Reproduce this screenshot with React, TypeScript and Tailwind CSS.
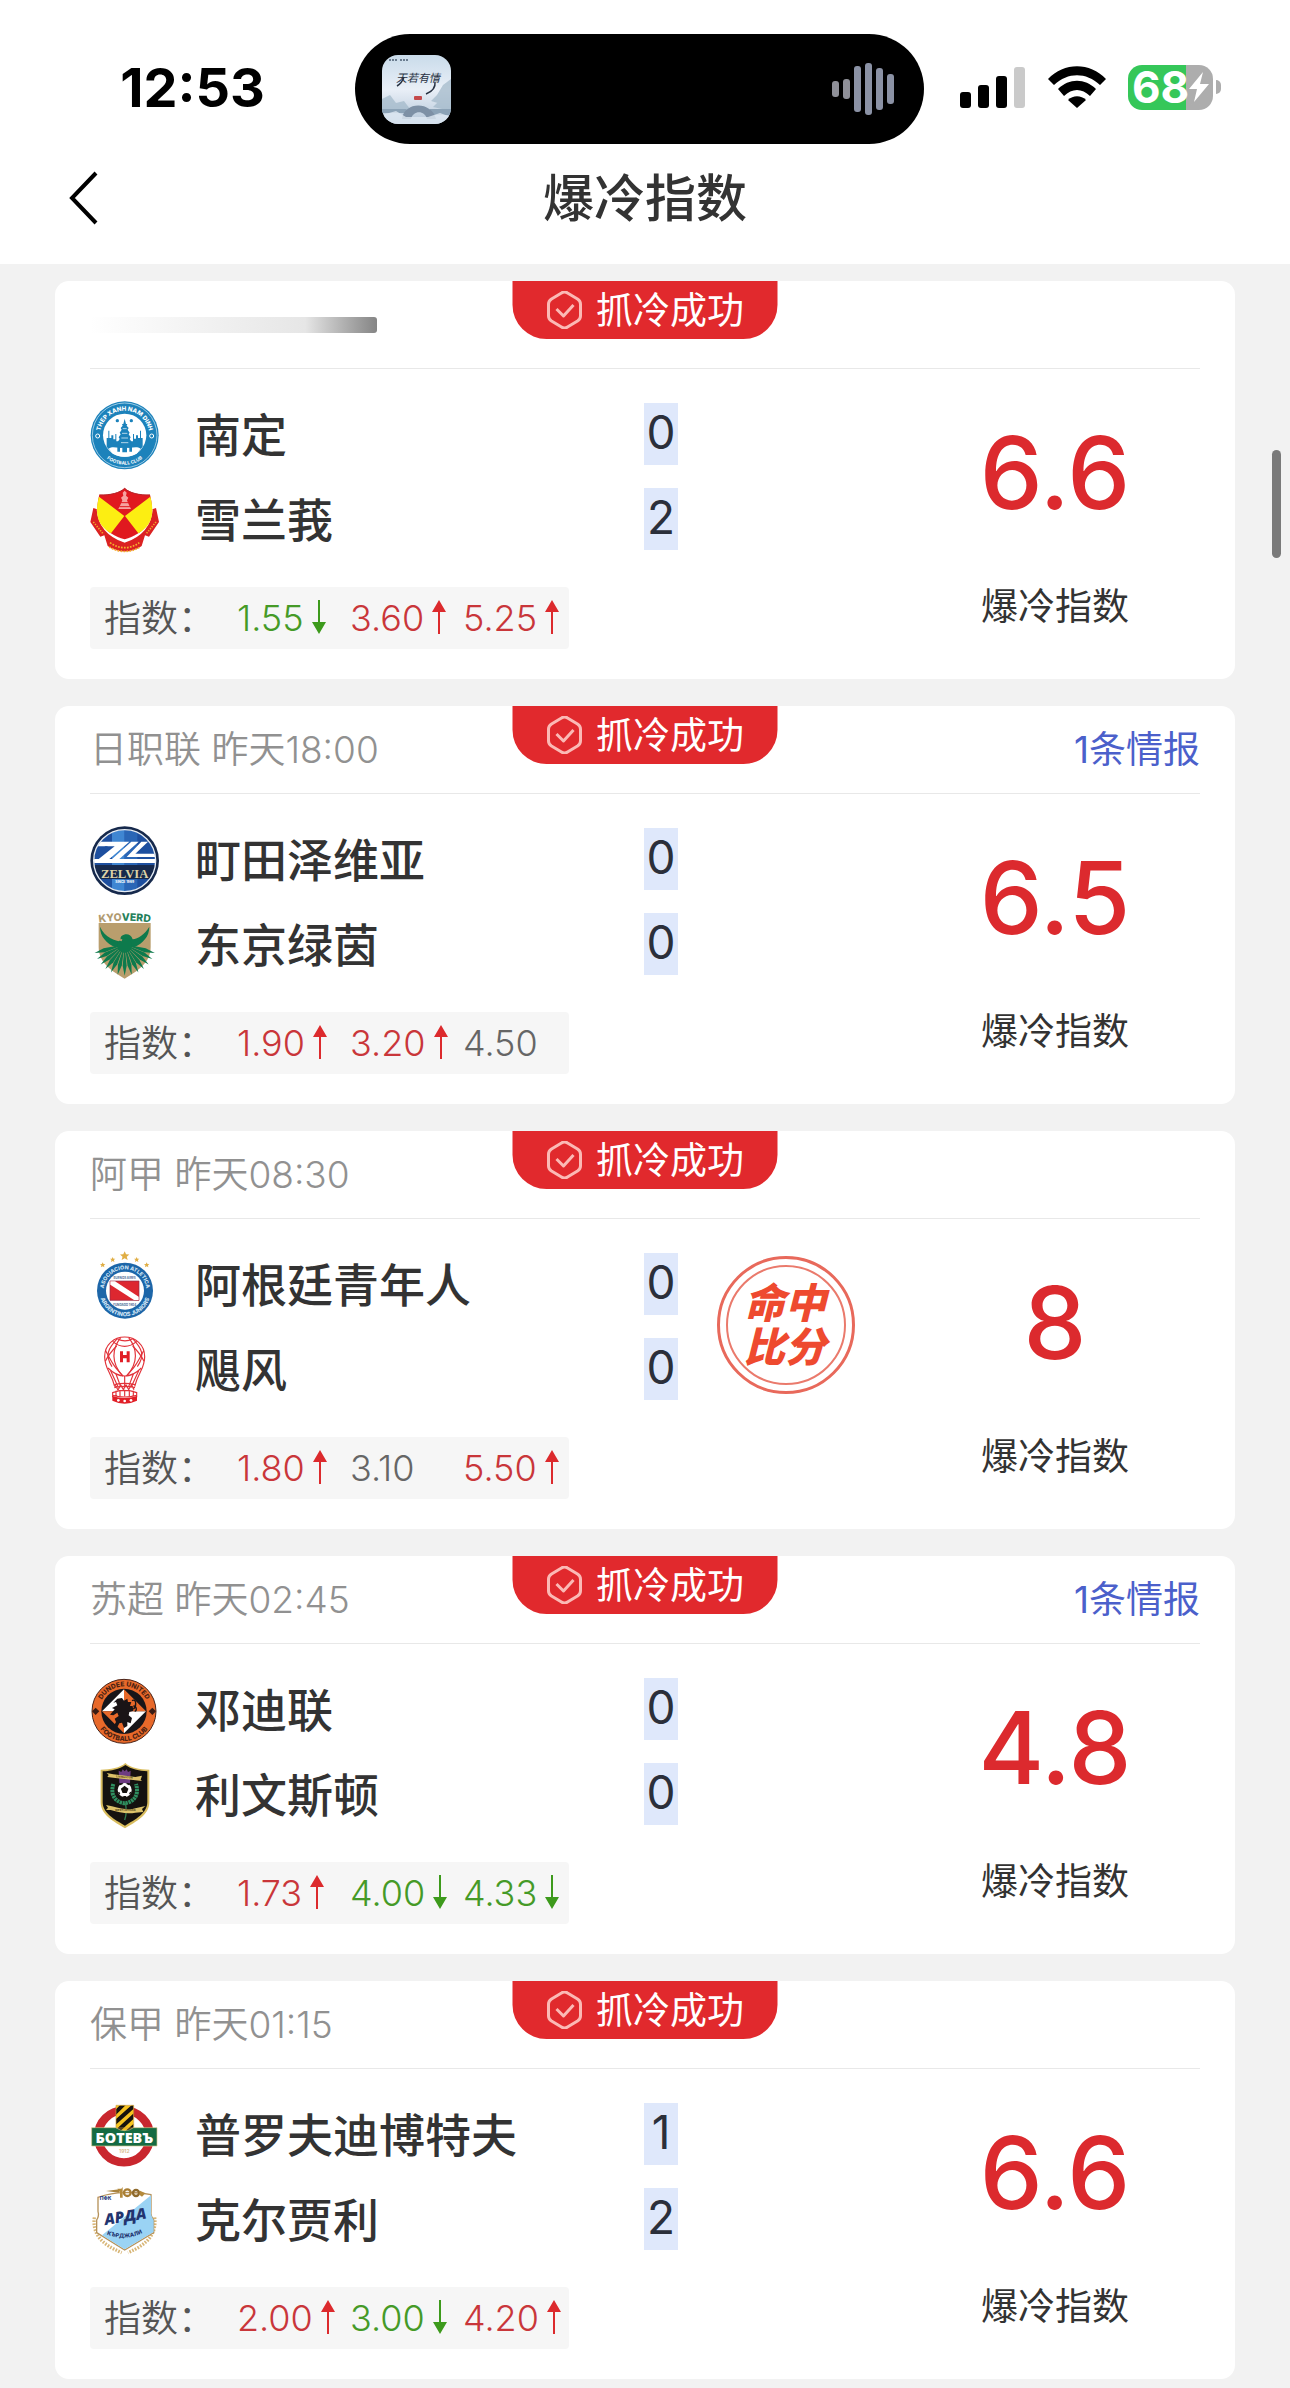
import type { ReactNode } from "react";

type Trend = "up" | "down" | "flat";
type Odd = { value: string; trend: Trend };
type Team = { name: string; score: number; crest: ReactNode };
type Match = {
  id: string;
  title?: string;
  intel?: string;
  teams: Team[];
  odds: Odd[];
  index: string;
  hit?: boolean;
};

/* ---------- club crests ---------- */

function Crest({ box, label, children }: { box: string; label: string; children: ReactNode }) {
  return (
    <svg viewBox={box} role="img" aria-label={label} className="size-[69px] shrink-0" fontFamily="Inter, sans-serif">
      {children}
    </svg>
  );
}

const NamDinh = (
  <Crest box="30 35 207 207" label="Nam Dinh">
    <circle cx="134" cy="138" r="102" fill="#1c82bb" />
    <circle cx="134" cy="138" r="97" fill="none" stroke="#d8edf8" strokeWidth="2" />
    <circle cx="134" cy="138" r="65" fill="#fff" />
    <path d="M80 172V146h5v-22h3v22h6v-8h6v12h6v-16h3v22h50v-22h3v14h6v-10h6v8h6v-22h3v22h5v26a65 65 0 0 1-108 0z" fill="#1c82bb" />
    <path d="M86 178c14-10 28 2 48-6 18 8 34-4 48 6l-12 15c-20 12-52 12-72 0z" fill="#fff" />
    <path d="M134 88l4 16h4l-2 5 6 7-3 5 6 9-3 5 6 9-3 5 6 9-3 5 4 8v16h-8v-12h-7v14h-14v-14h-7v12h-8v-16l4-8-3-5 6-9-3-5 6-9-3-5 6-9-3-5 6-7-2-5h4z" fill="#1c82bb" />
    <path d="M128 118h12M126 132h16M124 146h20M123 160h22" stroke="#fff" strokeWidth="2" />
    <circle cx="112" cy="94" r="5" fill="#1c82bb" />
    <circle cx="154" cy="94" r="5" fill="#1c82bb" />
    <circle cx="53" cy="140" r="6" fill="none" stroke="#fff" strokeWidth="3" />
    <circle cx="215" cy="140" r="6" fill="none" stroke="#fff" strokeWidth="3" />
    <path id="nd-top" d="M60 138a74 74 0 0 1 148 0" fill="none" />
    <path id="nd-bottom" d="M46 138a88 88 0 0 0 176 0" fill="none" />
    <text fontSize="18" fontWeight="800" fill="#fff" textAnchor="middle">
      <textPath href="#nd-top" startOffset="50%">THEP XANH NAM DINH</textPath>
    </text>
    <text fontSize="14" fontWeight="700" fill="#fff" textAnchor="middle">
      <textPath href="#nd-bottom" startOffset="50%">FOOTBALL CLUB</textPath>
    </text>
  </Crest>
);

const Selangor = (
  <Crest box="30 290 207 207" label="Selangor">
    <path d="M40 356l18 6c2 44 26 72 76 92 50-20 74-48 76-92l18-6 9 42-30 44-12-4-10 32c-30 22-72 22-102 0l-10-32-12 4-30-44z" fill="#db2222" />
    <path d="M54 360c4 56 40 82 80 96 40-14 76-40 80-96" fill="none" stroke="#fff" strokeWidth="8" />
    <path d="M40 398l30 36M228 398l-30 36" fill="none" stroke="#f3a92a" strokeWidth="5" strokeDasharray="4 4" />
    <path d="M90 460c28 20 60 20 88 0M88 473c28 18 64 18 92 0" fill="none" stroke="#f5b52d" strokeWidth="5" strokeDasharray="5 4" />
    <path d="M134 296c14 14 46 22 76 20 16 60 0 112-76 134-76-22-92-74-76-134 30 2 62-6 76-20z" fill="#e0191f" />
    <path d="M57 322l76 58-40 52c-40-22-50-58-36-110zM211 322l-76 58 40 52c40-22 50-58 36-110z" fill="#fcee12" />
    <path d="M134 297c14 14 44 21 76 20M134 297c-14 14-44 21-76 20" fill="none" stroke="#b5262b" strokeWidth="3" />
    <path d="M128 310l6-6 6 6-2 9 7 6-4 8 6 14 6 12h-38l6-12 6-14-4-8 7-6z" fill="#f6a3a0" />
    <path d="M122 340h24M118 352h32" stroke="#e0191f" strokeWidth="3" />
  </Crest>
);

const Zelvia = (
  <Crest box="30 35 207 207" label="Machida Zelvia">
    <defs>
      <clipPath id="zelvia-disc"><circle cx="134" cy="139" r="92" /></clipPath>
    </defs>
    <circle cx="134" cy="139" r="103" fill="#16294c" />
    <g clipPath="url(#zelvia-disc)">
      <path d="M30 40h210v200H30z" fill="#1d4f9f" />
      <path d="M96 40h38v200H96z" fill="#3f86d2" />
      <path d="M134 40h38v200h-38z" fill="#2a66b6" />
      <path d="M30 152h210v42H30z" fill="#16294c" />
      <path d="M56 82h92L88 134h24v12H34v-10L84 96H50z" fill="#fff" />
      <path d="M76 96h28l-48 38H34z" fill="#1d4f9f" />
      <path d="M154 82h22l-58 52h120v12H92v-8z" fill="#fff" />
      <path d="M184 82h20l-38 36h72v10h-98z" fill="#fff" />
    </g>
    <circle cx="134" cy="139" r="93" fill="none" stroke="#e6edf5" strokeWidth="4" />
    <text x="134" y="190" fontSize="38" fontWeight="700" fontFamily="Liberation Serif, serif" textAnchor="middle" fill="#ddd3a8" stroke="#16294c" strokeWidth="3" paintOrder="stroke">ZELVIA</text>
    <text x="134" y="206" fontSize="10" fontWeight="700" textAnchor="middle" fill="#fff">SINCE 1989</text>
  </Crest>
);

const feathers = [-74, -62, -50, -38, -26, -13, 0, 13, 26, 38, 50, 62, 74];

const Verdy = (
  <Crest box="30 290 207 207" label="Tokyo Verdy">
    <path id="verdy-arc" d="M52 325q82-12 164 0" fill="none" />
    <text fontSize="31" fontWeight="800" textAnchor="middle" fill="#b09a70">
      <textPath href="#verdy-arc" startOffset="50%">KYO<tspan fill="#24805a">VERD</tspan></textPath>
    </text>
    <path d="M56 326h156v72c0 48-40 72-78 95-38-23-78-47-78-95z" fill="#b99e6d" />
    <path d="M60 337c0 30 20 50 46 62h56c26-12 46-32 46-62-14 24-34 36-50 38-4-14-16-18-26-14-8 2-12 8-10 14 6-2 8 2 6 8-20-4-54-12-68-46z" fill="#0d7a4c" />
    {feathers.map((a) => (
      <path key={a} d="M134 392l-6 62 6 30 6-30z" fill="#0d7a4c" transform={`rotate(${a} 134 390) `} />
    ))}
    <circle cx="134" cy="394" r="22" fill="#0d7a4c" />
    <path d="M113 377l14-3-2 7z" fill="#b99e6d" />
  </Crest>
);

function Star({ x, y, s }: { x: number; y: number; s: number }) {
  return (
    <path
      d="M0-10l3 6.500 7 .5-5.500 4.500 2 7L0 5l-6.500 3.500 2-7L-10-3l7-.5z"
      fill="#e0ae45"
      transform={`translate(${x} ${y}) scale(${s})`}
    />
  );
}

const Argentinos = (
  <Crest box="30 37 207 207" label="Argentinos Juniors">
    <Star x={134} y={52} s={1.4} />
    <Star x={98} y={63} s={0.8} />
    <Star x={170} y={63} s={0.8} />
    <Star x={68} y={79} s={0.8} />
    <Star x={200} y={79} s={0.8} />
    <circle cx="135" cy="156" r="84" fill="#1d66a8" />
    <circle cx="135" cy="156" r="57" fill="#fff" />
    <path d="M90 127h87v58H90z" fill="#dd2730" stroke="#8e2b48" strokeWidth="2" />
    <path d="M91 128h14l71 46v10h-14L91 138z" fill="#fff" />
    <path id="aj-top" d="M71 156a64 64 0 0 1 128 0" fill="none" />
    <path id="aj-bottom" d="M58 156a77 77 0 0 0 154 0" fill="none" />
    <text fontSize="16" fontWeight="800" fill="#cfe4f5" textAnchor="middle">
      <textPath href="#aj-top" startOffset="50%">ASOCIACION ATLETICA</textPath>
    </text>
    <text fontSize="17" fontWeight="800" fill="#cfe4f5" textAnchor="middle">
      <textPath href="#aj-bottom" startOffset="50%">ARGENTINOS JUNIORS</textPath>
    </text>
    <text x="134" y="121" fontSize="9" fontWeight="700" fill="#4a6a94" textAnchor="middle">BUENOS AIRES</text>
    <text x="134" y="203" fontSize="9" fontWeight="700" fill="#4a6a94" textAnchor="middle">FUNDADO 1904</text>
  </Crest>
);

const Huracan = (
  <Crest box="30 292 207 207" label="Huracan">
    <g fill="none" stroke="#e2333a" strokeWidth="3.500">
      <path d="M104 444C94 400 74 392 74 354c0-36 28-59 60-59s60 23 60 59c0 38-20 46-30 90" />
      <path d="M112 300c14 8 32 8 46 0M98 308c22 20 50 20 72 0" />
      <path d="M112 300C84 330 74 350 96 384M158 300c28 30 38 50 14 84M122 297C96 330 92 372 128 412M146 297c26 33 30 75-6 115" />
      <path d="M77 336c24 46 28 50 52 76M191 336c-24 46-28 50-52 76" />
      <path d="M76 368c10-22 22-34 34-46M192 368c-10-22-22-34-34-46" />
      <path d="M84 388c20 20 36 24 50 24s30-4 50-24" />
      <path d="M92 396l22 48M108 406l14 38M134 412v32M160 406l-14 38M176 396l-22 48" />
      <path d="M103 438q31-8 62 0M103 447q31-8 62 0M106 440l8 14 8-15 8 14 8-14 8 14 8-14 8 14" />
      <path d="M98 462q36-14 72 0M98 470q36 10 72 0M98 460v16M170 460v16M108 456v16M120 454v18M134 453v20M148 454v18M160 456v16" />
    </g>
    <path d="M97 472q37 12 74 0v14q-37 18-74 0z" fill="#e11f27" />
    <g fill="#fff"><circle cx="115" cy="485" r="4" /><circle cx="134" cy="487" r="4" /><circle cx="153" cy="485" r="4" /></g>
    <path d="M120 338h9v11h11v-11h9v33h-9v-12h-11v12h-9z" fill="#e11f27" />
  </Crest>
);

const Dundee = (
  <Crest box="30 38 207 207" label="Dundee United">
    <circle cx="132" cy="144" r="96" fill="#e8692a" stroke="#48241a" strokeWidth="3" />
    <circle cx="132" cy="144" r="68" fill="#171519" />
    <path d="M132 78l-66 66h66zM132 144h66l-66 66z" fill="#fff" />
    <path d="M132 78l66 66h-66zM66 144h66v66z" fill="#e8692a" />
    <path d="M112 106l14-2 6 8 10-6 2 10 10 0-4 12 8 0 2 14-12 4-2 10 10 8-4 16-10-4 0 12-10 6-6-16-8 2-6 12-12-2 8-14-4-10 12-8-4-10-12 8-10-2 14-16-8-4 16-8-4-10-8 2z" fill="#1a1416" />
    <path d="M156 112c14-8 14 18 4 26M160 128c10 0 12 14 4 16" fill="none" stroke="#1a1416" strokeWidth="4" />
    <path d="M36 144l11-11 11 11-11 11zM206 144l11-11 11 11-11 11z" fill="#3a1c14" />
    <path id="du-top" d="M57 144a75 75 0 0 1 150 0" fill="none" />
    <path id="du-bottom" d="M43 144a89 89 0 0 0 178 0" fill="none" />
    <text fontSize="20" fontWeight="800" fill="#4a1f12" textAnchor="middle">
      <textPath href="#du-top" startOffset="50%">DUNDEE UNITED</textPath>
    </text>
    <text fontSize="20" fontWeight="800" fill="#4a1f12" textAnchor="middle">
      <textPath href="#du-bottom" startOffset="50%">FOOTBALL CLUB</textPath>
    </text>
  </Crest>
);

const Livingston = (
  <Crest box="30 293 207 207" label="Livingston">
    <path d="M136 299c16 14 42 20 72 20v98c0 38-40 58-73 78-33-20-73-40-73-78v-98c30 0 58-6 74-20z" fill="#d9bd5f" />
    <path d="M136 305c18 12 40 18 66 19v92c0 34-36 52-67 71-31-19-67-37-67-71v-92c26-1 50-7 68-19z" fill="#15120f" />
    <path d="M116 322l8 4 4-8 6 6 6-6 4 8 8-4-2 38h-32z" fill="#6d3b82" />
    <path d="M100 362c-12 40 14 56 34 58 20-2 46-18 34-58" fill="none" stroke="#2f8f60" strokeWidth="12" strokeDasharray="7 2" />
    <path d="M136 418q6 30-2 52" fill="none" stroke="#2f7d4f" strokeWidth="4" />
    <circle cx="134" cy="380" r="21" fill="#fff" />
    <path d="M134 370l9 7-4 10h-10l-4-10zM120 364l8-4M148 364l-8-4M116 386l3 7M152 386l-3 7M130 400h8" fill="#16120f" stroke="#16120f" strokeWidth="4" />
    <path d="M80 329l20 4 66 8 20-4-4 12 4 4-20-2-66-8-18-2 4-6z" fill="#dcc26a" />
    <path d="M78 425l18 4c30 8 54 12 70 6l30-7-10 9 4 9-24 2c-24 4-48 0-74-8l-14 0 6-7z" fill="#dcc26a" />
    <text x="133" y="344" fontSize="8" fontWeight="800" fill="#5a4a1c" textAnchor="middle" transform="rotate(5 133 344)">LIVINGSTON</text>
    <text x="136" y="442" fontSize="8" fontWeight="800" fill="#5a4a1c" textAnchor="middle">WEST LOTHIAN</text>
  </Crest>
);

const Botev = (
  <Crest box="30 41 207 207" label="Botev Plovdiv">
    <defs>
      <clipPath id="botev-flag"><path d="M108 54h53v70l-26 12-27-12z" /></clipPath>
    </defs>
    <circle cx="132" cy="147" r="78" fill="#fff" stroke="#c9272e" strokeWidth="25" />
    <g clipPath="url(#botev-flag)">
      <path d="M104 50h60v90h-60z" fill="#f6c31f" />
      <path d="M98 84l46-46M98 112l72-64M98 144l72-66M124 150l50-44" stroke="#17130e" strokeWidth="12" />
    </g>
    <path d="M108 54h53v68H108z" fill="none" stroke="#c99b3a" strokeWidth="2" />
    <path d="M35 121h72q27 18 54 0h70v55H35z" fill="#156b42" stroke="#d8c58b" strokeWidth="2" />
    <text x="133" y="166" fontSize="43" fontWeight="800" fontFamily="Open Sans, sans-serif" fill="#fff" textAnchor="middle">БОТЕВЪ</text>
    <text x="133" y="197" fontSize="15" fontWeight="600" fill="#d5b988" textAnchor="middle">1912</text>
  </Crest>
);

const Arda = (
  <Crest box="30 296 207 207" label="Arda">
    <path d="M43 390c-6 50 20 80 82 106M224 390c6 50-20 80-80 106" fill="none" stroke="#d8b677" strokeWidth="10" strokeDasharray="5 4" />
    <path d="M54 330q40-14 80-14 42-2 79 6v50q-2 12 8 26v38l-87 52-84-52v-38q8-12 4-26z" fill="#fff" stroke="#b6925a" strokeWidth="4" />
    <path d="M213 324v48q-2 12 8 26v36l-87 52-68-42z" fill="#9ad3f4" />
    <path d="M78 311l40-5v10z" fill="#a9843f" />
    <path d="M112 304h12l4-5v32h-8v-16z" fill="#b48a3c" />
    <circle cx="142" cy="316" r="10" fill="none" stroke="#a97e34" strokeWidth="7" />
    <circle cx="168" cy="317" r="9" fill="none" stroke="#8f6a2c" strokeWidth="7" />
    <path d="M180 310l16 8-10 10-8-6z" fill="#b48a3c" />
    <text x="77" y="338" fontSize="15" fontWeight="800" fill="#27407e" textAnchor="middle">ПФК</text>
    <text x="137" y="403" fontSize="46" fontWeight="800" fontStyle="italic" fontFamily="Open Sans, sans-serif" fill="#22346f" textAnchor="middle" transform="rotate(-9 137 394)">АРДА</text>
    <path id="arda-arc" d="M78 440q56 24 112-4" fill="none" />
    <text fontSize="17" fontWeight="800" fill="#22346f" textAnchor="middle">
      <textPath href="#arda-arc" startOffset="50%">КЪРДЖАЛИ</textPath>
    </text>
  </Crest>
);

/* ---------- data ---------- */

const matches: Match[] = [
  {
    id: "m1",
    teams: [
      { name: "南定", score: 0, crest: NamDinh },
      { name: "雪兰莪", score: 2, crest: Selangor },
    ],
    odds: [
      { value: "1.55", trend: "down" },
      { value: "3.60", trend: "up" },
      { value: "5.25", trend: "up" },
    ],
    index: "6.6",
  },
  {
    id: "m2",
    title: "日职联 昨天18:00",
    intel: "1条情报",
    teams: [
      { name: "町田泽维亚", score: 0, crest: Zelvia },
      { name: "东京绿茵", score: 0, crest: Verdy },
    ],
    odds: [
      { value: "1.90", trend: "up" },
      { value: "3.20", trend: "up" },
      { value: "4.50", trend: "flat" },
    ],
    index: "6.5",
  },
  {
    id: "m3",
    title: "阿甲 昨天08:30",
    teams: [
      { name: "阿根廷青年人", score: 0, crest: Argentinos },
      { name: "飓风", score: 0, crest: Huracan },
    ],
    odds: [
      { value: "1.80", trend: "up" },
      { value: "3.10", trend: "flat" },
      { value: "5.50", trend: "up" },
    ],
    index: "8",
    hit: true,
  },
  {
    id: "m4",
    title: "苏超 昨天02:45",
    intel: "1条情报",
    teams: [
      { name: "邓迪联", score: 0, crest: Dundee },
      { name: "利文斯顿", score: 0, crest: Livingston },
    ],
    odds: [
      { value: "1.73", trend: "up" },
      { value: "4.00", trend: "down" },
      { value: "4.33", trend: "down" },
    ],
    index: "4.8",
  },
  {
    id: "m5",
    title: "保甲 昨天01:15",
    teams: [
      { name: "普罗夫迪博特夫", score: 1, crest: Botev },
      { name: "克尔贾利", score: 2, crest: Arda },
    ],
    odds: [
      { value: "2.00", trend: "up" },
      { value: "3.00", trend: "down" },
      { value: "4.20", trend: "up" },
    ],
    index: "6.6",
  },
];

/* ---------- status bar ---------- */

function AlbumArt() {
  return (
    <svg viewBox="0 0 69 69" className="size-[69px] rounded-2xl" role="img" aria-label="专辑封面">
      <defs>
        <linearGradient id="sky" x1="0" y1="0" x2="0" y2="1">
          <stop offset="0" stopColor="#c9dbea" />
          <stop offset="0.5" stopColor="#e9eff7" />
          <stop offset="1" stopColor="#b4c6d8" />
        </linearGradient>
      </defs>
      <rect width="69" height="69" fill="url(#sky)" />
      <path d="M69 24l-8 6-6 10-6 6 20 6zM0 44l8-4 6 8 8-2 6 8-28 4zM69 42l-10 2-8 8 18 4z" fill="#9fb6c8" opacity="0.7" />
      <path d="M0 54h24l6 4H0zM48 54h21v6H46z" fill="#8ba2b6" />
      <path d="M20 64c2-18 30-18 34 0h-9c-2-9-14-9-16 0z" fill="#7d90a5" />
      <path d="M0 60l14-4 10 6h22l12-4 11 4v7H0z" fill="#dfe9f2" opacity="0.8" />
      <path d="M7 5h8M18 5h9" stroke="#6b7d90" strokeWidth="2" strokeDasharray="2 1" />
      <text x="14" y="27" fontSize="11" fill="#273142" fontFamily="Noto Sans CJK SC, sans-serif" fontStyle="italic">
        天若有情
      </text>
      <path d="M53 27q1 8-9 12M22 22q-2 6-7 9" stroke="#273142" strokeWidth="1.500" fill="none" />
      <rect x="32" y="41" width="8" height="4" rx="1" fill="#c4494b" />
    </svg>
  );
}

function Waveform() {
  const bars = [16, 20, 46, 52, 42, 30];
  return (
    <svg viewBox="0 0 62 52" className="h-[52px] w-[62px]" aria-hidden="true">
      {bars.map((h, i) => (
        <rect key={i} x={i * 11} y={26 - h / 2} width="7" height={h} rx="3" fill={i < 2 ? "#8f9098" : "#8b92a5"} />
      ))}
    </svg>
  );
}

function StatusBar() {
  return (
    <div className="grid grid-cols-[355fr_569fr_366fr] items-center pt-[34px]">
      <time className="pb-0.5 pl-[30px] text-center text-[54px] leading-none font-bold text-black">12:53</time>
      <div className="flex h-[110px] items-center justify-between rounded-full bg-black pr-[30px] pl-[27px]">
        <AlbumArt />
        <Waveform />
      </div>
      <div className="flex items-center gap-[22px] pb-1 pl-9">
        <svg viewBox="0 0 66 42" className="h-[42px] w-[66px]" role="img" aria-label="信号">
          <rect x="0" y="26" width="11" height="16" rx="3" />
          <rect x="18" y="19" width="11" height="23" rx="3" />
          <rect x="36" y="10" width="11" height="32" rx="3" />
          <rect x="54" y="1" width="11" height="41" rx="3" fill="#cacaca" />
        </svg>
        <svg viewBox="0 0 58 42" className="h-[42px] w-[58px]" role="img" aria-label="无线网络">
          <path d="M0 13C16-4 42-4 58 13l-6 6C38 6 20 6 6 19z" />
          <path d="M10 23c11-11 27-11 38 0l-6 7c-8-8-18-8-26 0z" />
          <path d="M20 34c5-5 13-5 18 0l-9 8z" />
        </svg>
        <div className="flex items-center gap-[3px]" role="img" aria-label="电量 68%">
          <div className="flex h-[45px] w-[85px] items-center rounded-[14px] bg-linear-to-r from-[#35c759] from-68% to-[#adadad] to-68% pl-1">
            <span className="text-[44px] leading-none font-bold text-white">68</span>
            <svg viewBox="0 0 20 30" className="h-[30px] w-5 shrink-0" aria-hidden="true">
              <path d="M14 0L0 17h8L5 30 20 12h-9z" fill="#fff" />
            </svg>
          </div>
          <div className="h-3.5 w-[5px] rounded-r-full bg-[#adadad]" />
        </div>
      </div>
    </div>
  );
}

function NavBar() {
  return (
    <nav className="grid h-[120px] grid-cols-[1fr_auto_1fr] items-center px-[68px] pb-3">
      <button type="button" aria-label="返回" className="w-[30px]">
        <svg viewBox="0 0 30 54" className="h-[54px] w-[30px]" aria-hidden="true">
          <path d="M28 2L4 27l24 25" fill="none" stroke="#000" strokeWidth="4" />
        </svg>
      </button>
      <h1 className="text-[51px] leading-none font-medium text-[#333]">爆冷指数</h1>
    </nav>
  );
}

/* ---------- match card ---------- */

function TrendArrow({ trend }: { trend: Trend }) {
  if (trend === "flat") return null;
  return (
    <svg viewBox="0 0 14 34" className="mb-0.5 h-[34px] w-3.5" role="img" aria-label={trend === "up" ? "上升" : "下降"}>
      {trend === "up" ? (
        <path d="M7 0l7 12H8v22H6V12H0z" fill="#dc2a2d" />
      ) : (
        <path d="M7 34L0 22h6V0h2v22h6z" fill="#3d9a1c" />
      )}
    </svg>
  );
}

const trendColor: Record<Trend, string> = {
  up: "text-[#c9363a]",
  down: "text-[#459a27]",
  flat: "text-[#666]",
};

function SuccessBadge() {
  return (
    <div className="absolute top-0 left-1/2 flex h-[58px] w-[265px] -translate-x-1/2 items-center justify-center gap-3.5 rounded-b-[34px] bg-[#e1292d] text-[37px] leading-none text-white">
      <svg viewBox="0 0 36 38" className="h-[38px] w-9" fill="none" stroke="#fbb9b5" strokeWidth="3" strokeLinejoin="round" aria-hidden="true">
        <path d="M15 2q3-2 6 0l10 6q3 2 3 5v12q0 3-3 5l-10 6q-3 2-6 0L5 30q-3-2-3-5V13q0-3 3-5z" />
        <path d="M10 18l7 7 10-11" />
      </svg>
      抓冷成功
    </div>
  );
}

function HitStamp() {
  return (
    <div className="flex size-[138px] items-center justify-center rounded-full border-[3px] border-[#e8695b] p-[6px]">
      <div className="flex size-full items-center justify-center rounded-full border-2 border-[#ea7a6c]">
        <span className="w-[84px] text-[41px] leading-[44px] font-black break-all text-[#ee4a2f] italic">命中比分</span>
      </div>
    </div>
  );
}

function MatchCard({ match }: { match: Match }) {
  return (
    <article className="relative rounded-[14px] bg-white px-[35px] pb-[30px]">
      <SuccessBadge />
      <header className="flex h-[88px] items-center justify-between border-b border-[#e8e8e8] text-[37px] leading-none">
        {match.title ? (
          <h2 className="font-[350] text-[#919191]">{match.title}</h2>
        ) : (
          <div className="h-4 w-[287px] rounded-r-[3px] bg-linear-to-r from-white via-[#e6e6e6] via-75% to-[#858585]" />
        )}
        {match.intel && (
          <a href={`#${match.id}`} className="font-normal text-[#4b60cb]">
            {match.intel}
          </a>
        )}
      </header>

      <div className="flex justify-between">
        <div className="pt-6">
          <div className="flex items-center">
            <ul>
              {match.teams.map((t) => (
                <li key={t.name} className="flex h-[85px] items-center">
                  {t.crest}
                  <span className="w-[485px] pb-0.5 pl-9 text-[46px] leading-none font-medium text-[#333]">{t.name}</span>
                  <span className="mb-1 flex h-[62px] w-[34px] items-center justify-center bg-[#dfe8fb] pb-1 text-[46px] leading-none text-[#2b2f3a]">
                    {t.score}
                  </span>
                </li>
              ))}
            </ul>
            {match.hit && (
              <div className="mb-1.5 ml-[39px]">
                <HitStamp />
              </div>
            )}
          </div>
          <dl className="mt-6 flex h-[62px] w-[479px] items-center rounded bg-[#f6f6f6] pl-3.5 text-[37px] leading-none">
            <dt className="w-[133px] shrink-0 font-[350] text-[#555]">指数：</dt>
            {match.odds.map((o, i) => (
              <dd key={i} className={`flex w-[113px] shrink-0 items-center gap-2 text-[36px] font-[350] ${trendColor[o.trend]}`}>
                {o.value}
                <TrendArrow trend={o.trend} />
              </dd>
            ))}
          </dl>
        </div>

        <div className="flex w-[290px] flex-col items-center pt-[55px]">
          <strong className="text-[100px] leading-[98px] font-[450] text-[#dc2a2e]">{match.index}</strong>
          <span className="mt-[66px] text-[37px] leading-none text-[#333]">爆冷指数</span>
        </div>
      </div>
    </article>
  );
}

export default function App() {
  return (
    <div className="relative min-h-screen bg-[#f2f2f2] font-['Inter','Noto_Sans_CJK_SC',sans-serif]" lang="zh-CN">
      <header className="bg-white">
        <StatusBar />
        <NavBar />
      </header>
      <main className="flex flex-col gap-[27px] px-[55px] pt-[17px] pb-2">
        {matches.map((m) => (
          <MatchCard key={m.id} match={m} />
        ))}
      </main>
      <div className="absolute top-[450px] right-[9px] h-[108px] w-[9px] rounded-full bg-[#7a7a7a]" />
    </div>
  );
}
